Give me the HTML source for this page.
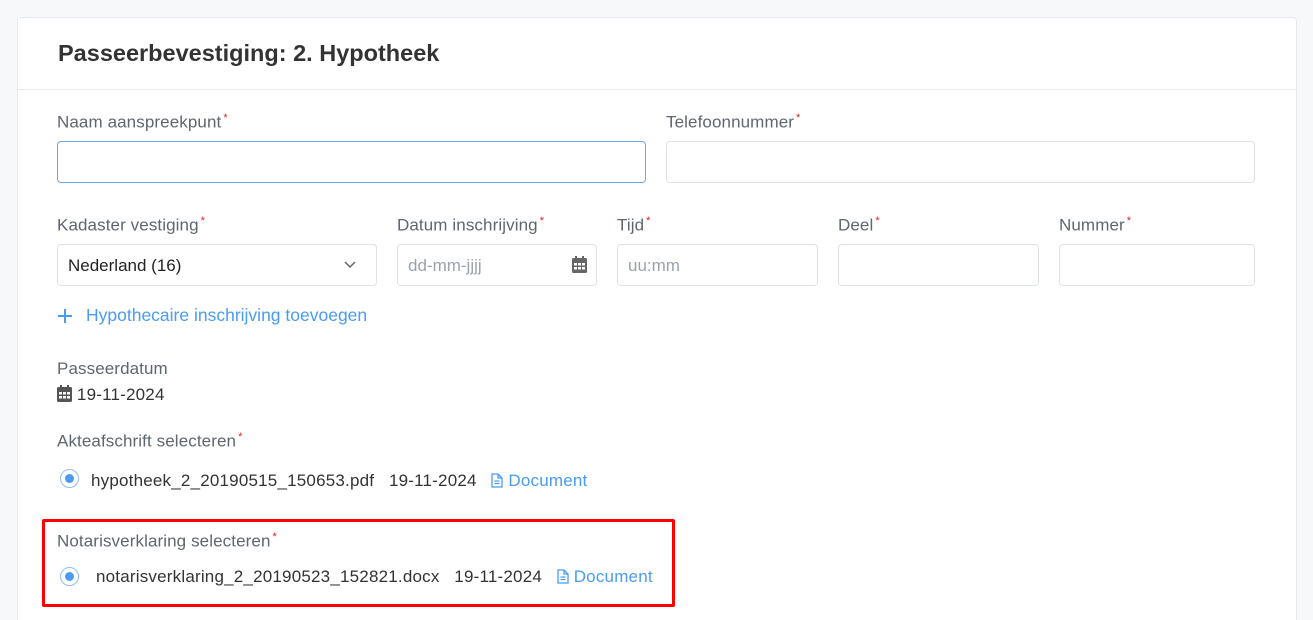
<!DOCTYPE html>
<html style="overflow:hidden;height:620px"><head><meta charset="utf-8"><style>
body{margin:0;background:#f7f8fa;width:1313px;height:620px;overflow:hidden;position:relative;font-family:"Liberation Sans",sans-serif;color:#333;}
.card{position:absolute;left:17px;top:17px;width:1278px;height:610px;background:#fff;border:1px solid #e5e8ee;border-radius:4px;}
.hd{position:absolute;left:0;top:0;width:1278px;height:71px;border-bottom:1px solid #e8ebf0;}
.t{position:absolute;left:40px;top:22px;font-size:23.5px;font-weight:bold;color:#333;}
.a{position:absolute;white-space:nowrap}
.lbl{font-size:17px;color:#5f6670;letter-spacing:0.1px}
.lbl sup{color:#e02020;font-size:11px;margin-left:2px}
.in{position:absolute;border:1px solid #dde1e8;border-radius:4px;background:#fff;height:40px;box-sizing:border-box;font-size:17px;padding:11px 10px;color:#9aa3ad;}
.blue{color:#4a9cf0}
.txt{font-size:17px;color:#333;letter-spacing:0.2px}
.radio{position:absolute;width:19px;height:19px;border:1.5px solid #8fbff2;border-radius:50%;box-sizing:border-box}
.radio:after{content:"";position:absolute;left:3.5px;top:3.5px;width:9px;height:9px;border-radius:50%;background:#4a9cf0}
</style></head><body>
<div class="card"><div class="hd"><div class="t">Passeerbevestiging: 2. Hypotheek</div></div></div>

<div class="a lbl" style="left:57px;top:112px">Naam aanspreekpunt<sup>*</sup></div>
<div class="in" style="left:57px;top:141px;width:589px;height:42px;border-color:#6aa8e8"></div>
<div class="a lbl" style="left:666px;top:112px">Telefoonnummer<sup>*</sup></div>
<div class="in" style="left:666px;top:141px;width:589px;height:42px"></div>

<div class="a lbl" style="left:57px;top:215px">Kadaster vestiging<sup>*</sup></div>
<div class="in" style="left:57px;top:244px;width:320px;height:42px;color:#222">Nederland (16)
<svg style="position:absolute;right:20px;top:16px" width="12" height="8" viewBox="0 0 12 8"><path d="M1 1l5 5 5-5" fill="none" stroke="#666" stroke-width="1.5"/></svg></div>
<div class="a lbl" style="left:397px;top:215px">Datum inschrijving<sup>*</sup></div>
<div class="in" style="left:397px;top:244px;width:200px;height:42px">dd-mm-jjjj
<svg style="position:absolute;right:9px;top:11px" width="15" height="17" viewBox="0 0 15 17"><rect x="0" y="2" width="15" height="15" rx="1.5" fill="#666"/><rect x="3" y="0" width="2" height="4" fill="#666"/><rect x="10" y="0" width="2" height="4" fill="#666"/><g fill="#fff"><rect x="2" y="7" width="3" height="2.5"/><rect x="6" y="7" width="3" height="2.5"/><rect x="10" y="7" width="3" height="2.5"/><rect x="2" y="11" width="3" height="2.5"/><rect x="6" y="11" width="3" height="2.5"/><rect x="10" y="11" width="3" height="2.5"/></g></svg></div>
<div class="a lbl" style="left:617px;top:215px">Tijd<sup>*</sup></div>
<div class="in" style="left:617px;top:244px;width:201px;height:42px">uu:mm</div>
<div class="a lbl" style="left:838px;top:215px">Deel<sup>*</sup></div>
<div class="in" style="left:838px;top:244px;width:201px;height:42px"></div>
<div class="a lbl" style="left:1059px;top:215px">Nummer<sup>*</sup></div>
<div class="in" style="left:1059px;top:244px;width:196px;height:42px"></div>

<svg class="a" style="left:57px;top:308px" width="16" height="16" viewBox="0 0 16 16"><path d="M8 1v14M1 8h14" stroke="#4a9cf0" stroke-width="2"/></svg>
<div class="a blue" style="left:86px;top:305px;font-size:17.5px;">Hypothecaire inschrijving toevoegen</div>

<div class="a lbl" style="left:57px;top:359px">Passeerdatum</div>
<div class="a txt" style="left:57px;top:385px"><svg width="15" height="17" viewBox="0 0 15 17" style="vertical-align:-2px"><rect x="0" y="2" width="15" height="15" rx="1.5" fill="#555"/><rect x="3" y="0" width="2" height="4" fill="#555"/><rect x="10" y="0" width="2" height="4" fill="#555"/><g fill="#fff"><rect x="2" y="7" width="3" height="2.5"/><rect x="6" y="7" width="3" height="2.5"/><rect x="10" y="7" width="3" height="2.5"/><rect x="2" y="11" width="3" height="2.5"/><rect x="6" y="11" width="3" height="2.5"/><rect x="10" y="11" width="3" height="2.5"/></g></svg> 19-11-2024</div>

<div class="a lbl" style="left:57px;top:431px">Akteafschrift selecteren<sup>*</sup></div>
<div class="radio" style="left:60px;top:469px"></div>
<div class="a txt" style="left:91px;top:471px">hypotheek_2_20190515_150653.pdf &nbsp;&nbsp;19-11-2024 &nbsp;&nbsp;<span class="blue"><svg width="12" height="15" viewBox="0 0 12 15" style="vertical-align:-2px"><path d="M1 1h6l4 4v9H1z M7 1v4h4 M3.5 8h5 M3.5 10.5h5" fill="none" stroke="#4a9cf0" stroke-width="1.3"/></svg> Document</span></div>

<div class="a" style="left:42px;top:519px;width:627px;height:82px;border:3px solid #ff0000;border-radius:2px"></div>
<div class="a lbl" style="left:57px;top:531px">Notarisverklaring selecteren<sup>*</sup></div>
<div class="radio" style="left:60px;top:567px"></div>
<div class="a txt" style="left:96px;top:567px">notarisverklaring_2_20190523_152821.docx &nbsp;&nbsp;19-11-2024 &nbsp;&nbsp;<span class="blue"><svg width="12" height="15" viewBox="0 0 12 15" style="vertical-align:-2px"><path d="M1 1h6l4 4v9H1z M7 1v4h4 M3.5 8h5 M3.5 10.5h5" fill="none" stroke="#4a9cf0" stroke-width="1.3"/></svg> Document</span></div>
</body></html>
